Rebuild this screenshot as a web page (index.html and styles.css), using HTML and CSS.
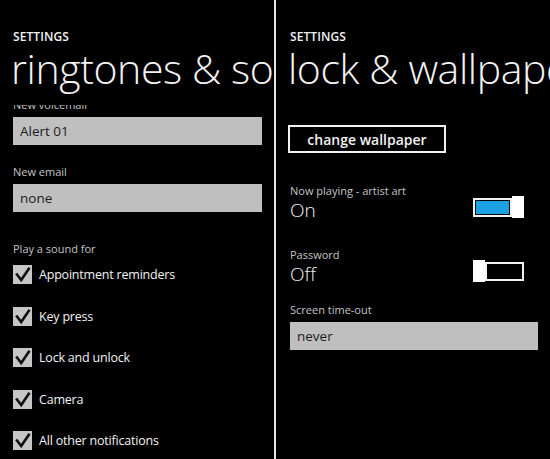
FILE: index.html
```html
<!DOCTYPE html>
<html lang="en">
  <head>
    <meta charset="UTF-8" />
    <meta name="viewport" content="width=device-width, initial-scale=1.0" />
    <title>Settings</title>
    <link rel="stylesheet" href="styles.css">
  </head>
  <body>
    <div class="phones">
      <section class="phone phone-left">
        <div class="app-name">SETTINGS</div>
        <h1 class="page-title">ringtones &amp; sounds</h1>

        <div class="content">
          <div class="scrolled">
            <div class="label first">New voicemail</div>
            <div class="textbox">Alert 01</div>

            <div class="label">New email</div>
            <div class="textbox">none</div>

            <div class="label group">Play a sound for</div>
            <ul class="checks">
              <li><span class="check"><svg viewBox="0 0 19 19"><path d="M4 9.5 L8.2 15 L15.8 3.8" /></svg></span>Appointment reminders</li>
              <li><span class="check"><svg viewBox="0 0 19 19"><path d="M4 9.5 L8.2 15 L15.8 3.8" /></svg></span>Key press</li>
              <li><span class="check"><svg viewBox="0 0 19 19"><path d="M4 9.5 L8.2 15 L15.8 3.8" /></svg></span>Lock and unlock</li>
              <li><span class="check"><svg viewBox="0 0 19 19"><path d="M4 9.5 L8.2 15 L15.8 3.8" /></svg></span>Camera</li>
              <li><span class="check"><svg viewBox="0 0 19 19"><path d="M4 9.5 L8.2 15 L15.8 3.8" /></svg></span>All other notifications</li>
            </ul>
          </div>
        </div>
      </section>

      <div class="divider"></div>

      <section class="phone phone-right">
        <div class="app-name">SETTINGS</div>
        <h1 class="page-title">lock &amp; wallpaper</h1>

        <button class="outline-button">change wallpaper</button>

        <div class="toggle-row first-toggle">
          <div>
            <div class="label">Now playing - artist art</div>
            <div class="toggle-value">On</div>
          </div>
          <div class="switch on">
            <span class="track"><span class="fill"></span></span>
            <span class="thumb"></span>
          </div>
        </div>

        <div class="toggle-row">
          <div>
            <div class="label">Password</div>
            <div class="toggle-value">Off</div>
          </div>
          <div class="switch off">
            <span class="thumb"></span>
            <span class="track"></span>
          </div>
        </div>

        <div class="label timeout">Screen time-out</div>
        <div class="textbox">never</div>
      </section>
    </div>
  </body>
</html>
```

FILE: styles.css
```css
:root {
  --text: #f2f2f2;
  --label: #c4c4c4;
  --box: #bfbfbf;
  --accent: #1ba1e2;
}

body {
  margin: 0;
  background: #000;
  font-family: "Open Sans", "Liberation Sans", sans-serif;
  color: var(--text);
}

.phones {
  display: flex;
  width: 550px;
  height: 459px;
  overflow: hidden;
}

.phone {
  width: 274px;
  height: 459px;
  overflow: hidden;
  padding: 30px 12px 0 13px;
  box-sizing: border-box;
  flex-shrink: 0;
}

.phone-right {
  padding-left: 14px;
}

.divider {
  width: 2px;
  background: #e6e6e6;
  flex-shrink: 0;
}

.app-name {
  font-size: 12px;
  line-height: 14px;
  font-weight: 600;
  letter-spacing: 0.1px;
}

.page-title {
  margin: 0;
  font-size: 41px;
  line-height: 48px;
  font-weight: 300;
  white-space: nowrap;
  letter-spacing: -0.4px;
  margin-left: -2px;
}

.content {
  margin-top: 13px;
  height: 360px;
  overflow: hidden;
}

.scrolled {
  margin-top: -7px;
}

.label {
  font-size: 11px;
  line-height: 14px;
  color: var(--label);
}

.textbox {
  height: 28px;
  line-height: 28px;
  background: var(--box);
  color: #1c1c1c;
  font-size: 13.5px;
  padding-left: 7px;
  margin-top: 5px;
}

.scrolled .label {
  margin-top: 20px;
}

.scrolled .label.first {
  margin-top: 0;
}

.scrolled .label.group {
  margin-top: 30px;
}

.checks {
  list-style: none;
  margin: 9px 0 0;
  padding: 0;
  display: flex;
  flex-direction: column;
  gap: 22.5px;
}

.checks li {
  display: flex;
  align-items: center;
  height: 19px;
  font-size: 12.5px;
  letter-spacing: -0.2px;
  gap: 7px;
}

.check {
  width: 19px;
  height: 19px;
  background: #c6c6c6;
  display: inline-block;
  flex-shrink: 0;
}

.check svg {
  width: 19px;
  height: 19px;
  display: block;
}

.check path {
  fill: none;
  stroke: #111;
  stroke-width: 2.6;
  stroke-linecap: square;
}

.outline-button {
  display: block;
  margin: 33px 0 0 -2px;
  width: 158px;
  height: 28px;
  background: #000;
  border: 2px solid #f2f2f2;
  color: var(--text);
  font-family: inherit;
  font-size: 14px;
  font-weight: 600;
  padding: 0;
}

.toggle-row {
  display: flex;
  justify-content: space-between;
  align-items: center;
  padding-right: 14px;
  margin-top: 26px;
}

.first-toggle {
  margin-top: 31px;
}

.toggle-value {
  font-size: 19px;
  line-height: 24px;
  font-weight: 300;
}

.switch {
  display: flex;
  align-items: center;
  margin-top: 8px;
}

.track {
  width: 39px;
  height: 19px;
  border: 2px solid #f2f2f2;
  padding: 1px;
  box-sizing: border-box;
  display: block;
}

.fill {
  display: block;
  width: 100%;
  height: 100%;
  background: var(--accent);
}

.thumb {
  width: 12px;
  height: 22px;
  background: #fff;
  display: block;
}

.timeout {
  margin-top: 17px;
}
```
